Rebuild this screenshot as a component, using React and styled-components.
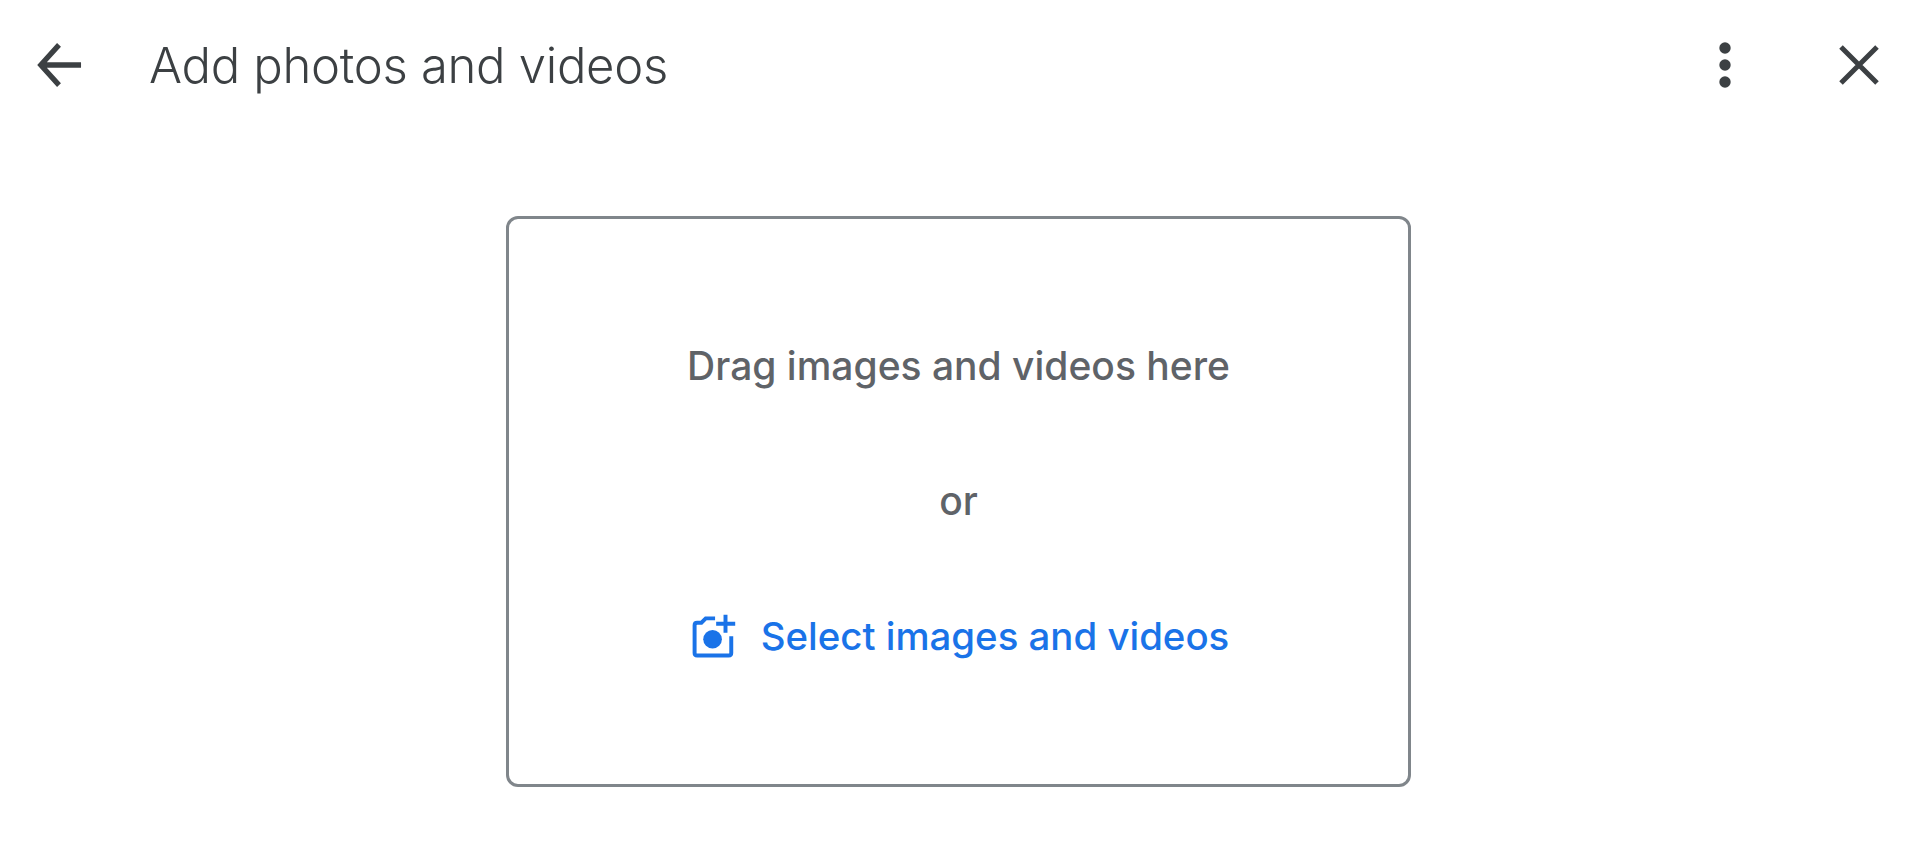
import React from "react";
import styled, { createGlobalStyle } from "styled-components";

const Global = createGlobalStyle`
  html, body { margin: 0; padding: 0; background: #fff; }
  body { font-family: Inter, Roboto, "Liberation Sans", sans-serif; overflow: hidden; }
`;

const Page = styled.div`
  width: 1920px;
  height: 859px;
  display: flex;
  flex-direction: column;
  background: #fff;
`;

const Header = styled.header`
  height: 130px;
  display: flex;
  align-items: center;
  padding: 0 41px 0 36px;
  box-sizing: border-box;
  color: #3c4043;
`;

const Title = styled.h1`
  flex: 1;
  margin: 0 0 0 67px;
  font-size: 49px;
  font-weight: 350;
  letter-spacing: -0.3px;
  color: #3c4043;
`;

const IconButton = styled.button`
  display: flex;
  align-items: center;
  justify-content: center;
  width: ${(p) => p.$size}px;
  height: ${(p) => p.$size}px;
  margin-left: ${(p) => p.$gap || 0}px;
  padding: 0;
  border: 0;
  background: none;
  color: inherit;
`;

const Drop = styled.section`
  width: 905px;
  height: 571px;
  margin: 86px 0 0 506px;
  padding-top: 79px;
  box-sizing: border-box;
  border: 3px solid #80868b;
  border-radius: 12px;
  display: grid;
  grid-auto-rows: 135px;
  justify-items: center;
  align-items: center;
`;

const Line = styled.div`
  font-size: 39px;
  font-weight: 480;
  color: #5f6368;
`;

const Select = styled.button`
  display: flex;
  align-items: center;
  gap: 24px;
  margin-left: 3px;
  padding: 0;
  border: 0;
  background: none;
  font: 480 38.4px Inter, Roboto, "Liberation Sans", sans-serif;
  color: #1a73e8;
`;

const Back = () => (
  <svg width="48" height="48" viewBox="0 0 48 48" fill="none" stroke="currentColor" strokeWidth="5.5">
    <path d="M47 24H5M24 3L5 24l19 21" />
  </svg>
);
const Dots = () => (
  <svg width="14" height="46" viewBox="0 0 14 46" fill="currentColor">
    <circle cx="7" cy="6" r="5.7" />
    <circle cx="7" cy="23" r="5.7" />
    <circle cx="7" cy="40" r="5.7" />
  </svg>
);
const Close = () => (
  <svg width="40" height="40" viewBox="0 0 40 40" fill="none" stroke="currentColor" strokeWidth="5">
    <path d="M2 2l36 36M38 2L2 38" />
  </svg>
);
const Camera = () => (
  <svg width="46" height="46" viewBox="55 70 128 128">
    <g fill="none" stroke="#1a73e8" strokeWidth="11">
      <path d="M122 85H96L84 97H72Q65 97 65 104V181Q65 188 72 188H160Q167 188 167 181V135" />
      <path d="M151 75V125M125 100H178" />
    </g>
    <circle cx="115" cy="143" r="26" fill="#1a73e8" />
  </svg>
);

export default function App() {
  return (
    <Page>
      <Global />
      <Header>
        <IconButton $size={46}><Back /></IconButton>
        <Title>Add photos and videos</Title>
        <IconButton $size={48}><Dots /></IconButton>
        <IconButton $size={40} $gap={90}><Close /></IconButton>
      </Header>
      <Drop>
        <Line>Drag images and videos here</Line>
        <Line>or</Line>
        <Select><Camera />Select images and videos</Select>
      </Drop>
    </Page>
  );
}
